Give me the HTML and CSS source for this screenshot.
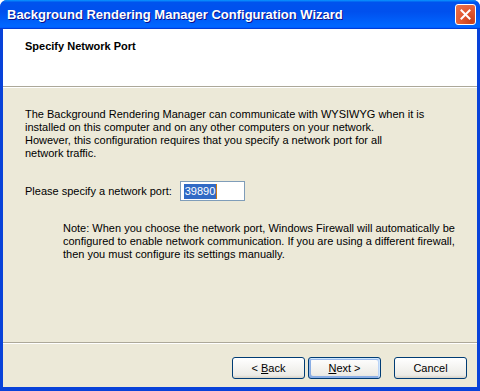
FILE: index.html
```html
<!DOCTYPE html>
<html lang="en">
<head>
    <meta charset="UTF-8">
    <title>Background Rendering Manager Configuration Wizard</title>
    <link rel="stylesheet" href="styles.css">
</head>
<body>
    <div class="window">
        <div class="titlebar">
            <span class="title">Background Rendering Manager Configuration Wizard</span>
            <button class="close" type="button" aria-label="Close">
                <svg width="11" height="11" viewBox="0 0 11 11">
                    <path d="M1.5 1.5 L9.5 9.5 M9.5 1.5 L1.5 9.5" stroke="#fff" stroke-width="2" stroke-linecap="square"/>
                </svg>
            </button>
        </div>
        <div class="client">
            <div class="header">
                <div class="header-title">Specify Network Port</div>
            </div>
            <div class="content">
                <p class="text">
                    The Background Rendering Manager can communicate with WYSIWYG when it is<br>
                    installed on this computer and on any other computers on your network.<br>
                    However, this configuration requires that you specify a network port for all<br>
                    network traffic.
                </p>
                <div class="port-row">
                    <label class="label" for="port">Please specify a network port:</label>
                    <div class="field" id="port"><span class="sel">39890</span><span class="caret"></span></div>
                </div>
                <p class="note">
                    Note: When you choose the network port, Windows Firewall will automatically be<br>
                    configured to enable network communication. If you are using a different firewall,<br>
                    then you must configure its settings manually.
                </p>
            </div>
            <div class="footer">
                <button class="button" type="button">&lt; <u>B</u>ack</button>
                <button class="button default" type="button"><u>N</u>ext &gt;</button>
                <button class="button cancel" type="button">Cancel</button>
            </div>
        </div>
    </div>
</body>
</html>
```

FILE: styles.css
```css
body {
    margin: 0;
    background: #fff;
    font-family: "Liberation Sans", Arial, sans-serif;
    font-size: 11px;
    color: #000;
}
.window {
    width: 480px;
    height: 391px;
    display: flex;
    flex-direction: column;
    background: #0842d9;
    border-radius: 7px 7px 0 0;
    overflow: hidden;
}
.titlebar {
    height: 29px;
    flex: none;
    display: flex;
    align-items: center;
    justify-content: space-between;
    padding: 0 4px 0 7px;
    background: linear-gradient(180deg, #0997ff, #0053ee 8%, #0050ee 40%, #06f 88%, #06f 93%, #005bff 95%, #003dd7 96%, #003dd7);
}
.title {
    color: #fff;
    font-weight: bold;
    font-size: 13px;
    text-shadow: 1px 1px #0f1089;
}
.close {
    width: 21px;
    height: 21px;
    padding: 0;
    display: flex;
    align-items: center;
    justify-content: center;
    border: 1px solid #fff;
    border-radius: 3px;
    background: radial-gradient(circle at 80% 85%, #c9401c, #e35a33 50%, #e8764f);
}
.client {
    flex: 1;
    display: flex;
    flex-direction: column;
    margin: 0 3px 4px 3px;
    background: #ece9d8;
}
.header {
    height: 58px;
    flex: none;
    box-sizing: border-box;
    padding: 11px 22px;
    background: #fff;
    border-bottom: 1px solid #aca899;
    box-shadow: 0 1px 0 #fff;
}
.header-title {
    font-weight: bold;
    line-height: 13px;
}
.content {
    flex: 1;
    padding: 21px 22px 0 22px;
    border-bottom: 1px solid #aca899;
    box-shadow: 0 1px 0 #fff;
}
.text, .note {
    margin: 0;
    line-height: 13px;
    white-space: nowrap;
}
.port-row {
    display: flex;
    align-items: center;
    gap: 8px;
    margin-top: 21px;
}
.field {
    width: 65px;
    height: 20px;
    box-sizing: border-box;
    border: 1px solid #7f9db9;
    background: #fff;
    display: flex;
    align-items: center;
    padding-left: 3px;
}
.sel {
    background: #316ac5;
    color: #fff;
    line-height: 15px;
    padding: 0 1px;
}
.caret {
    width: 1px;
    height: 15px;
    background: #c87a16;
}
.note {
    margin-top: 21px;
    margin-left: 38px;
}
.footer {
    height: 44px;
    flex: none;
    box-sizing: border-box;
    display: flex;
    justify-content: flex-end;
    padding: 14px 10px 0 0;
}
.button {
    width: 73px;
    height: 22px;
    padding: 0;
    font-family: inherit;
    font-size: 11px;
    color: #000;
    border: 1px solid #003c74;
    border-radius: 3px;
    background: linear-gradient(180deg, #fff, #ecebe6 86%, #d6d0c5);
    margin-left: 3px;
}
.default {
    box-shadow: inset -1px 1px #cee7ff, inset 1px 2px #98b8ea, inset -2px 2px #bcd4f6, inset 1px -1px #89ade4, inset 2px -2px #89ade4;
}
.cancel {
    margin-left: 13px;
}
```
